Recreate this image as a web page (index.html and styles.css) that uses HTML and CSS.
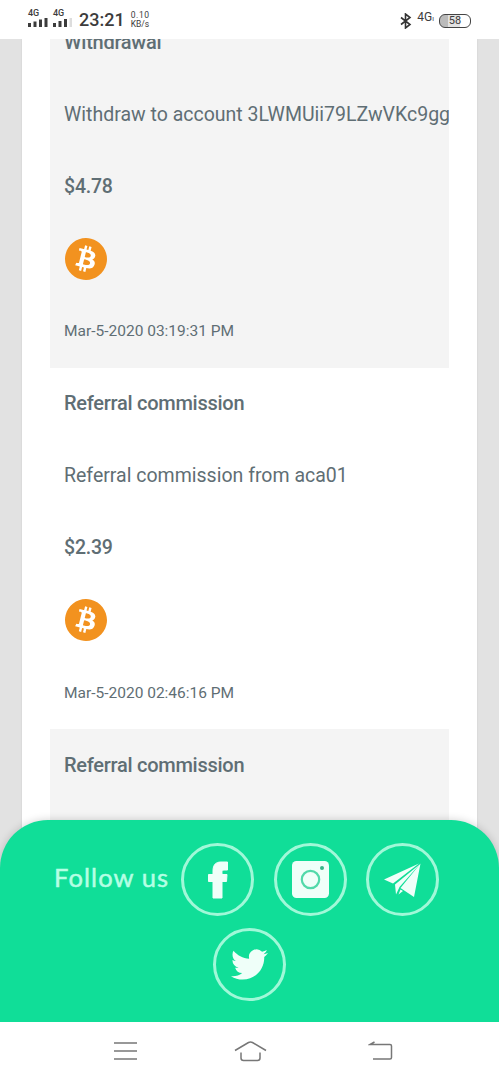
FILE: index.html
```html
<!DOCTYPE html>
<html lang="en">
<head>
<meta charset="utf-8">
<title>Transactions</title>
<link rel="stylesheet" href="styles.css">
</head>
<body>
<svg class="defs" aria-hidden="true">
  <symbol id="btc" viewBox="0 0 24 24">
    <circle cx="12" cy="12" r="11" fill="#fff"/>
    <path fill="#f2921f" d="M23.638 14.904c-1.602 6.430-8.113 10.340-14.542 8.736C2.670 22.050-1.244 15.525.362 9.105 1.962 2.670 8.475-1.243 14.900.358c6.430 1.605 10.342 8.115 8.738 14.548v-.002zm-6.350-4.613c.240-1.590-.974-2.450-2.640-3.030l.540-2.153-1.315-.330-.525 2.107c-.345-.087-.705-.167-1.064-.250l.526-2.127-1.320-.330-.540 2.165c-.285-.067-.565-.132-.840-.200l-1.815-.450-.350 1.407s.975.225.955.236c.535.136.630.486.615.766l-1.477 5.920c-.075.166-.240.406-.614.314.015.020-.960-.240-.960-.240l-.660 1.510 1.710.426.930.242-.540 2.190 1.320.327.540-2.170c.360.100.705.190 1.050.273l-.510 2.154 1.320.330.545-2.190c2.240.427 3.930.257 4.640-1.774.570-1.637-.030-2.580-1.217-3.196.854-.193 1.500-.760 1.680-1.930h.010zm-3.010 4.220c-.404 1.640-3.157.750-4.050.530l.720-2.900c.896.230 3.757.670 3.330 2.370zm.410-4.240c-.370 1.490-2.662.735-3.405.550l.654-2.640c.744.180 3.137.524 2.750 2.084v.006z"/>
  </symbol>
</svg>
<header class="status">
  <div class="signal"><span>4G</span>
    <svg width="20" height="9"><path d="M0 5h3v4H0zM5.500 3.500h3V9h-3zM11 1.500h3V9h-3zM16.500 0h3v9h-3z" fill="#3c3c3c"/></svg>
  </div>
  <div class="signal signal-two"><span>4G</span>
    <svg width="20" height="9"><path d="M0 5h3v4H0zM5.500 3h3v6h-3zM11 1h3v8h-3z" fill="#3c3c3c"/><path d="M16.500 0h2.500v9h-2.500z" fill="#ddd"/></svg>
  </div>
  <span class="clock">23:21</span>
  <div class="speed"><span>0.10</span><span>KB/s</span></div>
  <div class="status-right">
    <svg width="12" height="16" viewBox="0 0 12 16"><path d="M1 4.500l9 7-4.500 3.500V1L10 4.500l-9 7" fill="none" stroke="#333" stroke-width="1.600"/></svg>
    <span class="net">4G<i>ı</i></span>
    <div class="battery"><span>58</span></div>
  </div>
</header>
<main class="screen">
  <div class="card">
    <div class="list">
      <section class="record shaded">
        <div class="row strong">Withdrawal</div>
        <div class="row detail">Withdraw to account 3LWMUii79LZwVKc9gg</div>
        <div class="row amount">$4.78</div>
        <div class="row"><svg class="coin"><use href="#btc"/></svg></div>
        <div class="row date">Mar-5-2020 03:19:31 PM</div>
      </section>
      <section class="record">
        <div class="row strong">Referral commission</div>
        <div class="row detail">Referral commission from aca01</div>
        <div class="row amount">$2.39</div>
        <div class="row"><svg class="coin"><use href="#btc"/></svg></div>
        <div class="row date">Mar-5-2020 02:46:16 PM</div>
      </section>
      <section class="record shaded">
        <div class="row strong">Referral commission</div>
      </section>
    </div>
  </div>
  <footer class="follow">
    <div class="follow-row">
      <span class="follow-label">Follow us</span>
      <a class="social"><svg width="22" height="38" viewBox="0 0 22 38"><path d="M6 37V20.500H1.500v-7H6V10c0-6.500 3-9 8-9h6.500v8H17c-2 0-2 1-2 2.500v2h5l-.500 7H15V37z" fill="#effff9" stroke="#effff9" stroke-linejoin="round"/></svg></a>
      <a class="social"><svg width="37" height="37" viewBox="0 0 37 37"><rect width="37" height="37" rx="4.500" fill="#effff9"/><circle cx="18.500" cy="18.500" r="8.700" fill="none" stroke="#52d9aa" stroke-width="2.200"/><circle cx="30" cy="7" r="2" fill="#38b58a"/></svg></a>
      <a class="social"><svg width="38" height="34" viewBox="0 0 38 34"><path d="M0 16.500L35 .500 9 20.500zM11 21.500L35.500 1.500 15.500 24l-3.500 7.500zM16.500 25L36.500.500 30 34zM14.500 31.500l2-5 2.500 1.500z" fill="#effff9"/></svg></a>
    </div>
    <a class="social"><svg width="37" height="37" viewBox="0 0 24 24"><path fill="#effff9" d="M23.953 4.570a10 10 0 01-2.825.775 4.958 4.958 0 002.163-2.723c-.951.555-2.005.959-3.127 1.184a4.920 4.920 0 00-8.384 4.482C7.690 8.095 4.067 6.130 1.640 3.162a4.822 4.822 0 00-.666 2.475c0 1.710.870 3.213 2.188 4.096a4.904 4.904 0 01-2.228-.616v.060a4.923 4.923 0 003.946 4.827 4.996 4.996 0 01-2.212.085 4.936 4.936 0 004.604 3.417 9.867 9.867 0 01-6.102 2.105c-.390 0-.779-.023-1.170-.067a13.995 13.995 0 007.557 2.209c9.053 0 13.998-7.496 13.998-13.985 0-.210 0-.420-.015-.630A9.935 9.935 0 0024 4.590z"/></svg></a>
  </footer>
</main>
<nav class="nav">
  <svg width="24" height="18"><path d="M0 1h23M0 9h23M0 17h23"/></svg>
  <svg class="home" width="34" height="21"><path d="M1 9.500L14.500 1.500Q16.500.500 18.500 1.500L32 9.500M7 11.500v5.500q0 2.500 2.500 2.500h14q2.500 0 2.500-2.500v-5.500"/></svg>
  <svg width="25" height="20"><path d="M6.500 1L2 3.500h20q1.500 0 1.500 1.500v11.500q0 1.500-1.500 1.500H5"/></svg>
</nav>
</body>
</html>
```
FILE: styles.css
```css
* { box-sizing: border-box; }
body {
  margin: 0;
  width: 499px;
  height: 1080px;
  display: flex;
  flex-direction: column;
  overflow: hidden;
  background: #fff;
  font-family: Roboto, sans-serif;
  color: #5f6e74;
}
svg { display: block; flex: none; }
.defs { position: absolute; width: 0; height: 0; }
.status {
  height: 39px;
  flex: none;
  display: flex;
  align-items: flex-start;
  padding: 9px 28px 0 28px;
  color: #3c3c3c;
}
.signal { width: 20px; font-size: 9px; line-height: 9px; font-weight: 500; }
.signal-two { margin-left: 5px; }
.clock { margin-left: 6px; font-size: 18px; line-height: 22px; font-weight: 500; }
.speed { margin: 2px 0 0 6px; display: flex; flex-direction: column; font-size: 8.500px; line-height: 9px; }
.speed span:first-child { letter-spacing: 0.600px; }
.status-right { margin-left: auto; display: flex; align-items: center; padding-top: 2px; }
.net { margin-left: 5px; font-size: 12px; line-height: 13px; padding-bottom: 4px; }
.net i { font-size: 7px; font-style: normal; }
.battery {
  margin-left: 5px;
  width: 32px;
  height: 14px;
  border: 1.500px solid #444;
  border-radius: 6px;
  background: linear-gradient(90deg, #bbb 0 8px, #e2e2e2 8px 20px, #fff 20px);
  display: flex;
  align-items: center;
  justify-content: center;
  font-size: 11px;
  line-height: 11px;
}
.screen {
  position: relative;
  height: 983px;
  flex: none;
  overflow: hidden;
  background: #e2e2e2;
  padding: 0 22px;
}
.card {
  height: 100%;
  padding: 0 28px;
  background: #fff;
  box-shadow: 0 0 2px #ccc;
}
.list {
  width: 399px;
  height: 100%;
  overflow: hidden;
  display: flex;
  flex-direction: column;
}
.record { flex: none; }
.record:first-child { margin-top: -32.500px; }
.record:last-child { height: 361px; }
.shaded { background: #f4f4f4; }
.row {
  height: 72.300px;
  padding: 0 0 1.500px 14px;
  display: flex;
  align-items: center;
  white-space: nowrap;
  font-size: 19.500px;
}
.strong { font-weight: 500; font-size: 20px; letter-spacing: -0.270px; }
.amount { font-weight: 500; font-size: 19.500px; letter-spacing: -0.200px; }
.date { font-size: 15.500px; }
.coin { width: 42px; height: 42px; margin-left: 1px; }
.follow {
  position: absolute;
  left: 0;
  right: 0;
  bottom: 0;
  height: 202px;
  padding-top: 23px;
  border-radius: 48px 48px 0 0;
  background: #10de98;
  box-shadow: 0 0 9px rgba(0, 0, 0, 0.180);
  display: flex;
  flex-direction: column;
  align-items: center;
  gap: 12px;
}
.follow-row { width: 499px; padding-left: 54px; display: flex; align-items: center; }
.follow-label {
  width: 127px;
  white-space: nowrap;
  font-family: Lato, sans-serif;
  font-size: 25.500px;
  letter-spacing: 1.100px;
  -webkit-text-stroke: 0.500px #b5ffe4;
  color: #b5ffe4;
  padding-bottom: 6px;
}
.social {
  width: 73px;
  height: 73px;
  border: 3px solid #a0f8d8;
  border-radius: 50%;
  display: flex;
  align-items: center;
  justify-content: center;
}
.social + .social { margin-left: 20px; }
.social + .social + .social { margin-left: 19px; }
.nav {
  height: 58px;
  flex: none;
  display: flex;
  align-items: center;
  justify-content: space-between;
  padding: 0 106px 0 114px;
}
.nav svg { fill: none; stroke: #777; stroke-width: 1.500; }
.nav .home { margin-right: 5px; }
```
